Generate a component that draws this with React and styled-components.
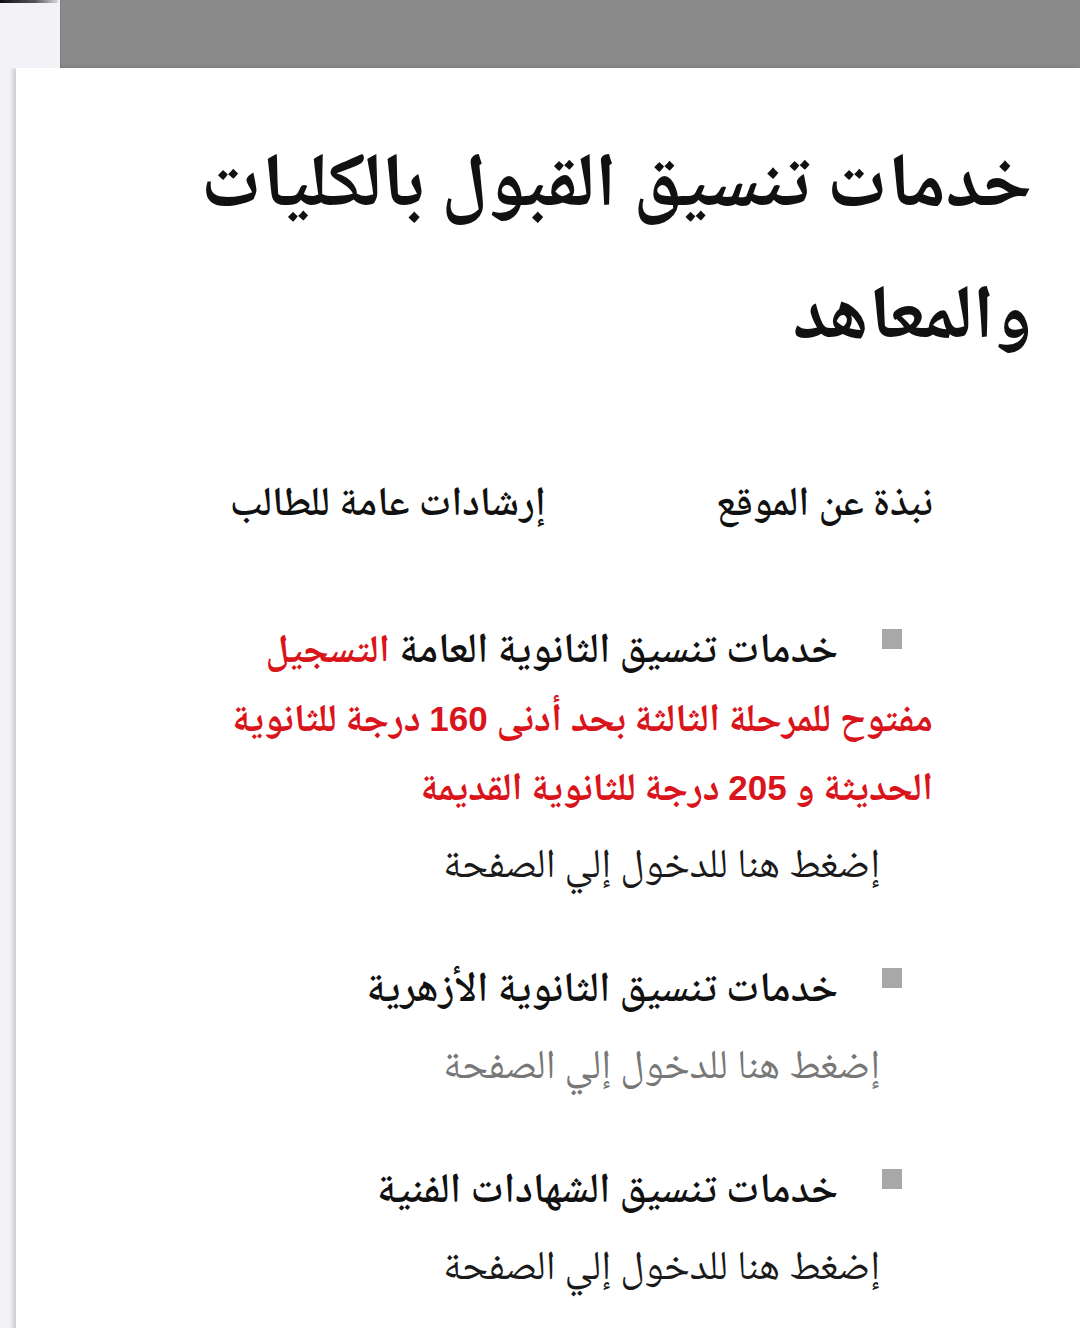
import React from "react";
import styled, { createGlobalStyle } from "styled-components";

const GlobalStyle = createGlobalStyle`
  html, body { margin: 0; padding: 0; background: #f4f4f8; }
  body { font-family: "Noto Naskh Arabic", "Noto Sans Arabic", "DejaVu Sans", sans-serif; }
  * { box-sizing: border-box; }
`;

const Page = styled.div`
  width: 1080px;
  min-height: 1328px;
  display: flex;
  flex-direction: column;
  overflow: hidden;
`;

const TopRow = styled.div`
  display: flex;
  height: 68px;
`;

const Corner = styled.div`
  width: 60px;
  background: #f3f3f7;
  position: relative;
  &::before {
    content: "";
    position: absolute;
    left: 0;
    top: 0;
    width: 58px;
    height: 3px;
    background: linear-gradient(to right, #111, #555 60%, rgba(120,120,120,0.2));
  }
`;

const GrayBar = styled.div`
  flex: 1;
  background: #8a8a8a;
  border-left: 1px solid #7e7e7e;
`;

const MainRow = styled.div`
  flex: 1;
  display: flex;
`;

const SideStrip = styled.div`
  width: 16px;
  background: #f4f4f8;
`;

const Card = styled.main`
  flex: 1;
  background: #ffffff;
  box-shadow: -3px 0 5px rgba(0, 0, 0, 0.18);
  direction: rtl;
  padding: 56px 48px 0 0;
  color: #111;
`;

const Title = styled.h1`
  margin: 0;
  font-size: 76px;
  font-weight: bold;
  line-height: 132px;
  text-align: right;
  width: 860px;
`;

const Nav = styled.ul`
  list-style: none;
  margin: 83px 99px 0 0;
  padding: 0;
  display: flex;
  gap: 170px;
`;

const NavItem = styled.li`
  font-size: 41px;
  font-weight: 600;
  line-height: 70px;
  color: #111;
`;

const List = styled.ul`
  list-style: none;
  margin: 78px 99px 0 0;
  padding: 0;
  width: 800px;
`;

const Item = styled.li`
  margin-bottom: 55px;
`;

const Heading = styled.div`
  font-size: 42px;
  line-height: 69px;
  font-weight: 600;
  color: #111;
  white-space: nowrap;
`;

const Bullet = styled.span`
  display: inline-block;
  width: 20px;
  height: 20px;
  background: #a8a8a8;
  margin-right: 31px;
  margin-left: 44px;
  vertical-align: 13px;
`;

const Alert = styled.span`
  color: #d9151b;
  font-weight: bold;
  font-size: 39px;
  line-height: 56px;
`;

const Num = styled.span`
  font-family: "Liberation Sans", Arial, sans-serif;
  font-weight: bold;
  font-size: 35px;
  line-height: 0;
`;

const EnterLink = styled.a`
  display: block;
  margin: 7px 53px 0 0;
  font-size: 41px;
  line-height: 70px;
  font-weight: normal;
  color: ${(p) => (p.$visited ? "#777777" : "#1a1a1a")};
  text-decoration: none;
`;

const items = [
  {
    title: "خدمات تنسيق الثانوية العامة",
    alert: true,
    visited: false,
  },
  { title: "خدمات تنسيق الثانوية الأزهرية", visited: true },
  { title: "خدمات تنسيق الشهادات الفنية", visited: false },
];

export default function App() {
  return (
    <>
      <GlobalStyle />
      <Page>
        <TopRow>
          <Corner />
          <GrayBar />
        </TopRow>
        <MainRow>
          <SideStrip />
          <Card>
            <Title>خدمات تنسيق القبول بالكليات والمعاهد</Title>
            <Nav>
              <NavItem>نبذة عن الموقع</NavItem>
              <NavItem>إرشادات عامة للطالب</NavItem>
            </Nav>
            <List>
              {items.map((it) => (
                <Item key={it.title}>
                  <Heading>
                    <Bullet />
                    {it.title}
                    {it.alert && (
                      <>
                        {"  "}
                        <Alert>
                          التسجيل
                          <br />
                          مفتوح للمرحلة الثالثة بحد أدنى <Num>160</Num> درجة للثانوية
                          <br />
                          الحديثة و <Num>205</Num> درجة للثانوية القديمة
                        </Alert>
                      </>
                    )}
                  </Heading>
                  <EnterLink href="#" $visited={it.visited}>
                    إضغط هنا للدخول إلي الصفحة
                  </EnterLink>
                </Item>
              ))}
            </List>
          </Card>
        </MainRow>
      </Page>
    </>
  );
}
